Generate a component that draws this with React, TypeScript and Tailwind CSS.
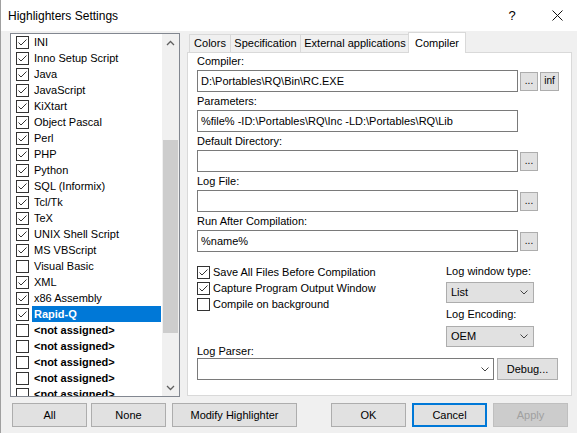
import React from "react";

const items: { t: string; c: boolean; s?: "sel" | "bold" }[] = [
  { t: "INI", c: true },
  { t: "Inno Setup Script", c: true },
  { t: "Java", c: true },
  { t: "JavaScript", c: true },
  { t: "KiXtart", c: true },
  { t: "Object Pascal", c: true },
  { t: "Perl", c: true },
  { t: "PHP", c: true },
  { t: "Python", c: true },
  { t: "SQL (Informix)", c: true },
  { t: "Tcl/Tk", c: true },
  { t: "TeX", c: true },
  { t: "UNIX Shell Script", c: true },
  { t: "MS VBScript", c: true },
  { t: "Visual Basic", c: false },
  { t: "XML", c: true },
  { t: "x86 Assembly", c: true },
  { t: "Rapid-Q", c: true, s: "sel" },
  { t: "<not assigned>", c: false, s: "bold" },
  { t: "<not assigned>", c: false, s: "bold" },
  { t: "<not assigned>", c: false, s: "bold" },
  { t: "<not assigned>", c: false, s: "bold" },
  { t: "<not assigned>", c: false, s: "bold" },
];

function Check({ on }: { on: boolean }) {
  return (
    <div className="w-[13px] h-[13px] border border-[#333333] bg-white shrink-0 flex items-center justify-center">
      {on && (
        <svg width="11" height="11" viewBox="0 0 11 11">
          <path d="M1.5 5.5 L4 8 L9.5 2.5" fill="none" stroke="#333333" strokeWidth="1" />
        </svg>
      )}
    </div>
  );
}

function Chevron({ up }: { up?: boolean }) {
  return (
    <svg width="9" height="6" viewBox="0 0 9 6">
      <path
        d={up ? "M1 5 L4.5 1.5 L8 5" : "M1 1 L4.5 4.5 L8 1"}
        fill="none"
        stroke="#606060"
        strokeWidth="1.3"
      />
    </svg>
  );
}

function SmallChevron() {
  return (
    <svg width="8" height="5" viewBox="0 0 8 5">
      <path d="M0.5 0.5 L4 4 L7.5 0.5" fill="none" stroke="#444444" strokeWidth="1" />
    </svg>
  );
}

function TextBox({ value, w }: { value: string; w: string }) {
  return (
    <div className={`${w} h-[22px] border border-[#7a7a7a] bg-white flex items-center px-[3px] whitespace-nowrap overflow-hidden`}>
      {value}
    </div>
  );
}

function SmallBtn({ label, w }: { label: string; w: string }) {
  return (
    <div className={`${w} h-[19px] ml-[2px] border border-[#adadad] bg-[#e1e1e1] flex items-center justify-center text-[10px] leading-none`}>
      {label}
    </div>
  );
}

function Group({
  label,
  value,
  inf,
  first,
  noBtn,
}: {
  label: string;
  value: string;
  inf?: boolean;
  first?: boolean;
  noBtn?: boolean;
}) {
  return (
    <div className={first ? "" : "mt-[1px]"}>
      <div className="h-[17px] leading-[17px]">{label}</div>
      <div className="flex items-center">
        <TextBox value={value} w="w-[321px]" />
        {!noBtn && <SmallBtn label="..." w="w-[18px]" />}
        {inf && <SmallBtn label="inf" w="w-[19px]" />}
      </div>
    </div>
  );
}

function Select({ value }: { value: string }) {
  return (
    <div className="w-[88px] h-[21px] border border-[#adadad] bg-[#e1e1e1] flex items-center pl-[4px] pr-[5px]">
      <span className="flex-1">{value}</span>
      <SmallChevron />
    </div>
  );
}

function Button({ label, w, variant }: { label: string; w: string; variant?: "focus" | "disabled" }) {
  const cls =
    variant === "focus"
      ? "border-2 border-[#0078d7] bg-[#e1e1e1] text-black"
      : variant === "disabled"
      ? "border border-[#bfbfbf] bg-[#cccccc] text-[#a0a0a0]"
      : "border border-[#adadad] bg-[#e1e1e1] text-black";
  return <div className={`${w} h-[24px] flex items-center justify-center ${cls}`}>{label}</div>;
}

export default function App() {
  return (
    <div className="w-[577px] h-[433px] bg-[#f0f0f0] border-l border-[#a0a0a0] overflow-hidden font-['Liberation_Sans',Arial,sans-serif] text-[11px] text-black">
      {/* Title bar */}
      <div className="h-[31px] bg-white flex items-center pl-[7px] text-[12px]">
        <span className="flex-1">Highlighters Settings</span>
        <span className="w-[20px] text-center text-[13px] mr-[25px]">?</span>
        <span className="w-[20px] flex items-center justify-center mr-[10px]">
          <svg width="11" height="11" viewBox="0 0 11 11">
            <path d="M0.5 0.5 L10.5 10.5 M10.5 0.5 L0.5 10.5" stroke="#111111" strokeWidth="1" />
          </svg>
        </span>
      </div>

      {/* Body */}
      <div className="flex pl-[9px] pt-[2px]">
        {/* List box */}
        <div className="w-[170px] h-[364px] border border-[#828790] bg-white flex">
          <div className="w-[151px] overflow-hidden">
            {items.map((it, i) => (
              <div key={i} className="h-[16px] flex items-center">
                <div className="pl-[5px] pr-[3px]">
                  <Check on={it.c} />
                </div>
                <div
                  className={`flex-1 h-[16px] leading-[16px] pl-[2px] mr-[1px] whitespace-nowrap ${
                    it.s === "sel" ? "bg-[#0078d7] text-white font-bold" : it.s === "bold" ? "font-bold" : ""
                  }`}
                >
                  {it.t}
                </div>
              </div>
            ))}
          </div>
          <div className="w-[17px] bg-[#f0f0f0] flex flex-col">
            <div className="h-[17px] flex items-center justify-center">
              <Chevron up />
            </div>
            <div className="h-[89px]" />
            <div className="h-[193px] mx-[1px] bg-[#cdcdcd]" />
            <div className="flex-1" />
            <div className="h-[17px] flex items-center justify-center">
              <Chevron />
            </div>
          </div>
        </div>

        {/* Tabs + panel */}
        <div className="ml-[7px] w-[385px] flex flex-col">
          <div className="h-[20px] flex items-end pl-[2px] relative z-10 mb-[-1px]">
            <div className="w-[42px] h-[18px] border border-b-0 border-[#d9d9d9] bg-[#f0f0f0] flex items-center justify-center mb-[1px]">
              Colors
            </div>
            <div className="w-[70px] h-[18px] border border-l-0 border-b-0 border-[#d9d9d9] bg-[#f0f0f0] flex items-center justify-center mb-[1px]">
              Specification
            </div>
            <div className="w-[109px] h-[18px] border border-l-0 border-b-0 border-[#d9d9d9] bg-[#f0f0f0] flex items-center justify-center mb-[1px]">
              External applications
            </div>
            <div className="w-[58px] h-[21px] ml-[-2px] border border-b-0 border-[#d9d9d9] bg-white flex items-start justify-center pt-[2px]">
              Compiler
            </div>
          </div>
          <div className="h-[344px] border border-[#d9d9d9] bg-white pl-[9px]">
            <Group first label="Compiler:" value="D:\Portables\RQ\Bin\RC.EXE" inf />
            <Group label="Parameters:" value="%file% -ID:\Portables\RQ\Inc -LD:\Portables\RQ\Lib" noBtn />
            <Group label="Default Directory:" value="" />
            <Group label="Log File:" value="" />
            <Group label="Run After Compilation:" value="%name%" />

            <div className="flex mt-[11px]">
              <div className="flex-1 pt-[1px]">
                {[
                  ["Save All Files Before Compilation", true],
                  ["Capture Program Output Window", true],
                  ["Compile on background", false],
                ].map(([t, c], i) => (
                  <div key={i} className="h-[16px] flex items-center">
                    <Check on={c as boolean} />
                    <span className="ml-[3px]">{t as string}</span>
                  </div>
                ))}
              </div>
              <div className="w-[88px] mr-[37px]">
                <div className="h-[16px] leading-[16px] whitespace-nowrap">Log window type:</div>
                <div className="mt-[3px]">
                  <Select value="List" />
                </div>
                <div className="mt-[3px] h-[16px] leading-[16px] whitespace-nowrap">Log Encoding:</div>
                <div className="mt-[4px]">
                  <Select value="OEM" />
                </div>
              </div>
            </div>

            <div className="mt-[-3px] h-[14px] leading-[14px]">Log Parser:</div>
            <div className="flex items-center">
              <div className="w-[297px] h-[22px] border border-[#7a7a7a] bg-white flex items-center justify-end pr-[4px]">
                <SmallChevron />
              </div>
              <div className="ml-[3px] w-[61px] h-[22px] border border-[#adadad] bg-[#e1e1e1] flex items-center justify-center">
                Debug...
              </div>
            </div>
          </div>
        </div>
      </div>

      {/* Bottom buttons */}
      <div className="flex mt-[6px] pl-[11px]">
        <Button label="All" w="w-[75px]" />
        <div className="ml-[4px]">
          <Button label="None" w="w-[75px]" />
        </div>
        <div className="ml-[6px]">
          <Button label="Modify Highlighter" w="w-[125px]" />
        </div>
        <div className="ml-[34px]">
          <Button label="OK" w="w-[75px]" />
        </div>
        <div className="ml-[6px]">
          <Button label="Cancel" w="w-[75px]" variant="focus" />
        </div>
        <div className="ml-[6px]">
          <Button label="Apply" w="w-[75px]" variant="disabled" />
        </div>
      </div>
    </div>
  );
}
